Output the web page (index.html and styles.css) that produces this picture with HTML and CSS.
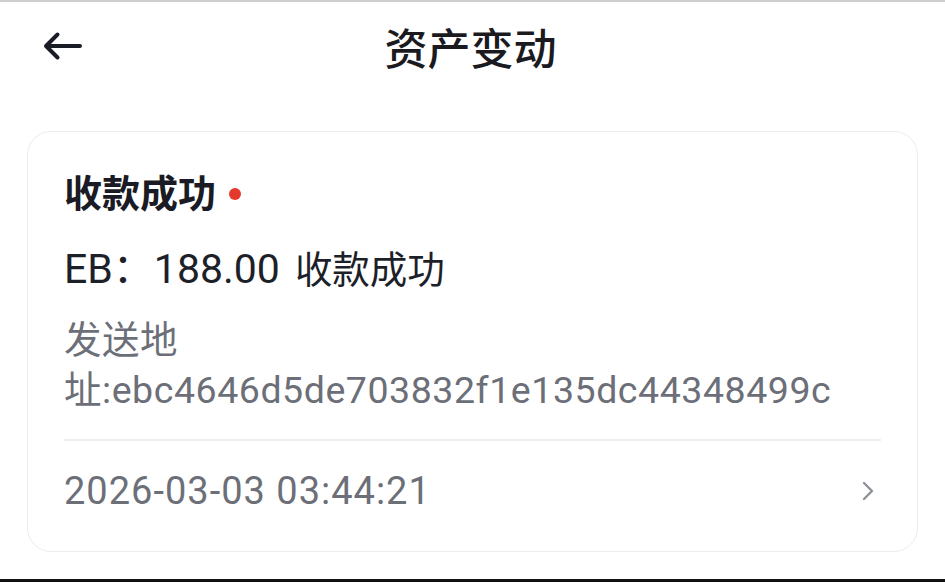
FILE: index.html
```html
<!DOCTYPE html>
<html lang="zh-CN">
<head>
    <meta charset="UTF-8">
    <title>资产变动</title>
    <link rel="stylesheet" href="styles.css">
</head>
<body>

<!-- Topo -->
<header class="topbar">
    <button class="btn-voltar" aria-label="返回">
        <svg width="40" height="30" viewBox="0 0 40 30">
            <path d="M38 15 H4 M15.5 3.5 L4 15 L15.5 26.5" fill="none" stroke="#1b1d26" stroke-width="4" stroke-linecap="round" stroke-linejoin="round"/>
        </svg>
    </button>
    <h1>资产变动</h1>
    <span></span>
</header>

<!-- Registro -->
<div class="card">
    <h2 class="card-titulo">收款成功<span class="ponto"></span></h2>
    <p class="valor"><span class="valor-num">EB：188.00</span><span class="valor-txt">收款成功</span></p>
    <p class="endereco">发送地址:ebc4646d5de703832f1e135dc44348499c</p>
    <div class="divisor"></div>
    <div class="rodape">
        <span class="data">2026-03-03 03:44:21</span>
        <svg class="seta" width="14" height="22" viewBox="0 0 14 22">
            <path d="M3 3 L11 11 L3 19" fill="none" stroke="#8f9199" stroke-width="2.4" stroke-linecap="round" stroke-linejoin="round"/>
        </svg>
    </div>
</div>

</body>
</html>
```

FILE: styles.css
```css
body {
    margin: 0;
    height: 577px;
    font-family: 'Roboto', 'Noto Sans CJK SC', sans-serif;
    background: white;
    color: #1b1d26;
    border-top: 2px solid #cfcfcf;
    border-bottom: 3px solid #111;
}

.topbar {
    display: grid;
    grid-template-columns: 1fr auto 1fr;
    align-items: center;
    height: 88px;
    padding: 0 42px;
}

.btn-voltar {
    background: none;
    border: none;
    padding: 0;
    width: 40px;
    height: 30px;
    display: flex;
    cursor: pointer;
}

.topbar h1 {
    margin: 0 4px 0 0;
    font-size: 43px;
    font-weight: 500;
    color: #1a1a1f;
}

.card {
    margin: 41px 27px 0 27px;
    padding: 37px 36px 35px 36px;
    border: 1.5px solid #ececec;
    border-radius: 24px;
}

.card-titulo {
    margin: 0;
    font-size: 38px;
    line-height: 50px;
    font-weight: 700;
    color: #1a1b24;
    display: flex;
    align-items: center;
}

.ponto {
    width: 12px;
    height: 12px;
    border-radius: 50%;
    background: #e5392e;
    margin-left: 13px;
}

.valor {
    margin: 25px 0 0 0;
    font-size: 37.5px;
    line-height: 50px;
    color: #1d1f29;
}

.valor-num {
    font-size: 41px;
}

.valor-txt {
    margin-left: 15px;
}

.endereco {
    margin: 20px 0 0 0;
    font-size: 37.5px;
    line-height: 50px;
    letter-spacing: 0.55px;
    color: #6c6f78;
}

.divisor {
    margin-top: 24px;
    height: 1.5px;
    background: #eeeeee;
}

.rodape {
    margin-top: 25px;
    display: flex;
    align-items: center;
    justify-content: space-between;
    height: 50px;
}

.data {
    font-size: 38px;
    letter-spacing: 1px;
    color: #6c6f78;
}

.seta {
    margin-right: 6px;
}
```
